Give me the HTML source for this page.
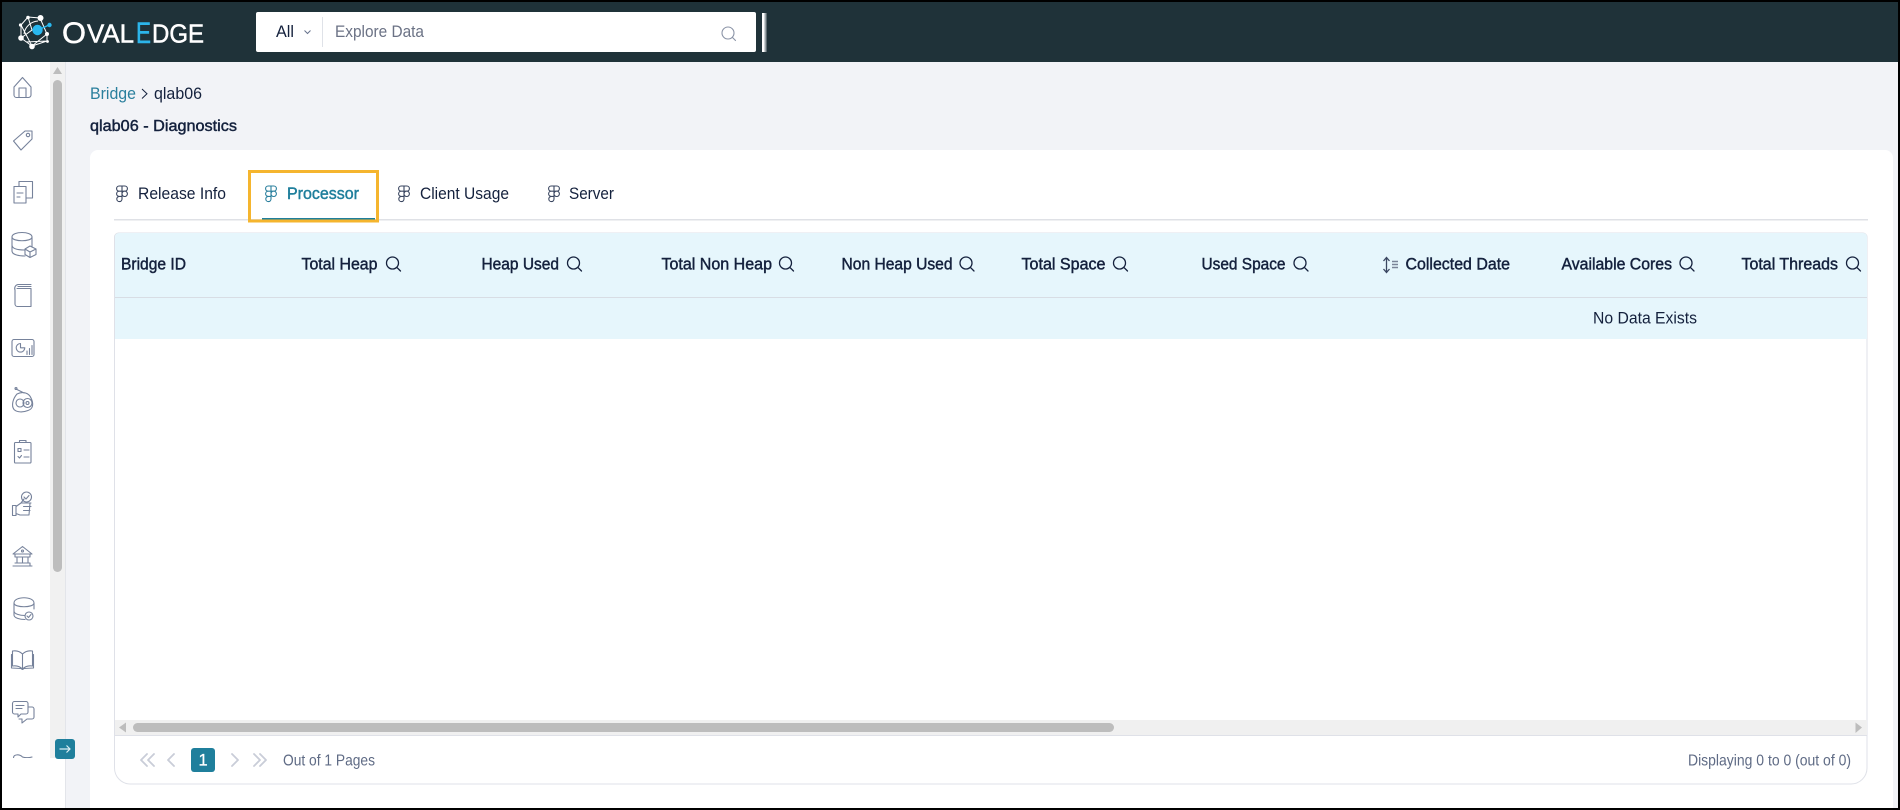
<!DOCTYPE html>
<html><head><meta charset="utf-8"><title>qlab06 - Diagnostics</title>
<style>
html,body{margin:0;padding:0;width:1900px;height:810px;overflow:hidden;background:#000}
svg{position:absolute;left:0;top:0;display:block}
text{font-family:"Liberation Sans",Arial,sans-serif;font-size:16.5px;fill:#14213d}
.m{stroke:#14213d;stroke-width:.45px}
.g{fill:#5f6b85;font-size:16px}
.ic{fill:none;stroke:#76829b;stroke-width:1.1;stroke-linecap:round;stroke-linejoin:round}
.fg{fill:none;stroke:#3a4660;stroke-width:1.1}
.s{fill:none;stroke:#14213d;stroke-width:1.3;stroke-linecap:round}
.c{fill:none;stroke:#c9cdd8;stroke-width:1.8;stroke-linecap:round;stroke-linejoin:round}
</style></head><body>
<svg width="1900" height="810" viewBox="0 0 1900 810" xmlns="http://www.w3.org/2000/svg">
<defs>
<g id="fig"><path d="M6 1H3.2a2.6 2.6 0 0 0 0 5.2H6zM6 1h2.8a2.6 2.6 0 0 1 0 5.2H6zM6 6.2H3.2a2.6 2.6 0 0 0 0 5.2H6zM6 8.8a2.6 2.6 0 1 1 5.4 0a2.6 2.6 0 1 1-5.4 0zM6 11.4H3.2a2.6 2.6 0 1 0 2.8 2.6z"/></g>
<g id="mag"><circle cx="7" cy="7" r="6"/><path d="M11.4 11.4L15 15"/></g>
<clipPath id="sb"><rect x="2" y="62" width="48" height="696"/></clipPath>
</defs>
<!-- page frame -->
<rect x="2" y="2" width="1896" height="806" fill="#f2f3f7"/>
<rect x="2" y="2" width="1896" height="60" fill="#1f3239"/>
<!-- logo -->
<g fill="none" stroke="#fff" stroke-width="1">
<path d="M40 18L28 17L21 25L21 38L32 46L47 34L40 18M28 17L32 30L21 38M21 25L32 46M32 46L47 41M24 34A15 15 0 0 1 38 21M26 42L47 41M47 34L47 41"/>
</g>
<g fill="#fff"><circle cx="40.500" cy="18" r="3"/><circle cx="21" cy="38" r="2.800"/><circle cx="32" cy="46.500" r="2.800"/><circle cx="47" cy="34" r="2"/><circle cx="47.500" cy="41.500" r="1.400"/><circle cx="20.500" cy="25" r="1.600"/><circle cx="28" cy="17.500" r="1.800"/></g>
<path d="M38 30L49 25" stroke="#29b8ef" stroke-width="1.300"/>
<circle cx="37.500" cy="30" r="5.200" fill="#29b8ef"/><circle cx="49.500" cy="25" r="2.200" fill="#29b8ef"/>
<text x="62" y="43" textLength="24" lengthAdjust="spacingAndGlyphs" style="font-size:30px;fill:#fff;stroke:#fff;stroke-width:.5px">O</text>
<text x="87" y="42.500" textLength="47" lengthAdjust="spacingAndGlyphs" style="font-size:26px;fill:#fff;stroke:#fff;stroke-width:.5px">VAL</text>
<text x="136" y="43" textLength="15" lengthAdjust="spacingAndGlyphs" style="font-size:30px;fill:#2cb5ea;stroke:#2cb5ea;stroke-width:.5px">E</text>
<text x="152" y="42.500" textLength="52" lengthAdjust="spacingAndGlyphs" style="font-size:26px;fill:#fff;stroke:#fff;stroke-width:.5px">DGE</text>
<!-- search -->
<rect x="256" y="12" width="500" height="40" rx="2" fill="#fff"/>
<text x="276" y="37" textLength="18" lengthAdjust="spacingAndGlyphs">All</text>
<path d="M304.500 30.500L307.500 33.500L310.500 30.500" fill="none" stroke="#66728c" stroke-width="1"/>
<rect x="322" y="17" width="1" height="30" fill="#dfe2e8"/>
<text x="335" y="37" textLength="89" lengthAdjust="spacingAndGlyphs" style="fill:#6b7285">Explore Data</text>
<g transform="translate(721,26)" fill="none" stroke="#8a93a6" stroke-width="1.100" stroke-linecap="round"><circle cx="7" cy="7" r="6"/><path d="M11.400 11.400L14.500 14.500"/></g>
<rect x="762" y="13" width="2.500" height="39" fill="#fff"/><rect x="764.500" y="13" width="2" height="39" fill="#9aa3a8"/>
<!-- sidebar -->
<rect x="2" y="62" width="63" height="746" fill="#fff"/>
<rect x="50" y="62" width="15" height="696" fill="#f1f1f1"/>
<rect x="65" y="62" width="1" height="746" fill="#e3e5ea"/>
<path d="M57.500 67L53 74H62z" fill="#bdbdbd"/>
<rect x="53" y="80" width="9" height="492" rx="4.500" fill="#bdbdbd"/>
<g class="ic" clip-path="url(#sb)">
<!-- home -->
<path d="M14 87L22.500 77.500L31 87V95a2.500 2.500 0 0 1-2.500 2.500H16.500a2.500 2.500 0 0 1-2.500-2.500zM19 97.500V88H26V97.500"/>
<!-- tag -->
<path d="M13.500 141L25 131H32V139L21 150z"/><circle cx="28" cy="135" r="1.700"/>
<!-- docs -->
<path d="M14 186.500H26V203H14zM19 186V181.500H32.500V198H26M17 193H23M17 197H20"/>
<!-- db cube -->
<path d="M12 237c0-6 20-6 20 0v10M12 237c0 5 20 5 20 0M12 237v14c0 4 8 5 13 5M12 245c0 4 7 5 13 5"/><path d="M30 246L36 249V254.500L30 257.500L25 254.500V249zM25 249L30 252L36 249M30 252V257.500"/>
<!-- book -->
<path d="M15 290V304a2.500 2.500 0 0 0 2.500 2.500H31V288.500H17M15 290a4 4 0 0 1 3-5.500H31M18 286.500H31"/>
<!-- dashboard -->
<rect x="12" y="339.500" width="22" height="17" rx="2"/><path d="M20.500 343.500a4.300 4.300 0 1 0 4.300 4.300H20.500zM27 354.500V351M29.500 354.500V348.500M32 354.500V345.500"/>
<!-- robot -->
<path d="M16 389L24 393M17 394c6-3 12-1 14 4c3 6 2 11-3 12.500c-5 2-11 2-14-1c-3-4-1-11 3-15.500z"/><circle cx="16" cy="388.500" r="1"/><circle cx="20" cy="403" r="4"/><circle cx="27.500" cy="403" r="4.500"/><circle cx="27.500" cy="403" r="1.500"/>
<!-- checklist -->
<rect x="14.500" y="442.500" width="16.500" height="20.500" rx="1"/><path d="M19.500 442.500V440.500H26V442.500M18 448.500H21V451.500H18zM24 450H29M18 456.500L19.500 458L21.500 455.500M24 457H29"/>
<!-- hand -->
<path d="M12.500 505.500H16V515.500H12.500zM16 506.500L21 503L24 499M21 503H31M30 503L29 515H20L16 513.500M23.500 506.500H31M23.500 510.500H30"/><circle cx="26.500" cy="497" r="5"/><path d="M24 497L26 499L29 495.500"/>
<!-- bank -->
<path d="M13 554L22.500 546.500L32 554ZM15 554V557H30V554M17 557V563M22.500 557V563M28 557V563M15 563H30V566M13 566H32"/><circle cx="22.500" cy="551" r="1"/>
<!-- db check -->
<path d="M14 603c0-7 20-7 20 0v6M14 603c0 5 20 5 20 0M14 603v12c0 3 6 4.500 11 4.500M14 611c0 3 6 4.500 11 4.500"/><circle cx="29" cy="616" r="4"/><path d="M27 616L28.500 617.500L31 614.500"/>
<!-- open book -->
<path d="M22.500 654c-3-3-7-3.500-10-3V666c3-.5 7 0 10 3c3-3 7-3.500 10-3V651c-3-.5-7 0-10 3zM22.500 654V669M12 654.500H11.500V668L21 668.500L22.500 669.500L24 668.500L33.500 668V654.500H33"/>
<!-- chat -->
<path d="M14.500 701.500H26a2 2 0 0 1 2 2V712a2 2 0 0 1-2 2H21L18 717V714H14.500a2 2 0 0 1-2-2V703.500a2 2 0 0 1 2-2zM16 705.500H24M16 708.500H22M28 707H32a2 2 0 0 1 2 2V717a2 2 0 0 1-2 2H27L22 723V719H19"/>
<!-- cut-off -->
<path d="M13.500 758c0-4 6-4 9-1c3 1 6 1 9.500 0"/>
</g>
<rect x="55" y="739" width="20" height="20" rx="3" fill="#1f7f9c"/>
<path d="M59.500 749H70M66.500 745.500L70 749L66.500 752.500" fill="none" stroke="#dbeef4" stroke-width="1.200"/>
<!-- breadcrumb -->
<text x="90" y="99" textLength="46" lengthAdjust="spacingAndGlyphs" style="fill:#2a7f9d">Bridge</text>
<path d="M142 89L147 93.800L142 98.500" fill="none" stroke="#14213d" stroke-width="1"/>
<text x="154" y="99" textLength="48" lengthAdjust="spacingAndGlyphs">qlab06</text>
<text x="90" y="131" textLength="147" lengthAdjust="spacingAndGlyphs" class="m" style="font-size:15.500px">qlab06 - Diagnostics</text>
<!-- card -->
<path d="M90 808V158a8 8 0 0 1 8-8H1885a8 8 0 0 1 8 8V808z" fill="#fff"/>
<!-- tabs -->
<rect x="114" y="219" width="1754" height="1.500" fill="#dfe1e6"/>
<use href="#fig" x="116" y="185" class="fg"/>
<use href="#fig" x="265" y="185" class="fg" style="stroke:#2a7f9d"/>
<use href="#fig" x="398" y="185" class="fg"/>
<use href="#fig" x="548" y="185" class="fg"/>
<text x="138" y="199" textLength="88" lengthAdjust="spacingAndGlyphs">Release Info</text>
<text x="287" y="199" textLength="72" lengthAdjust="spacingAndGlyphs" style="fill:#1f7f9c;stroke:#1f7f9c;stroke-width:.45px">Processor</text>
<text x="420" y="199" textLength="89" lengthAdjust="spacingAndGlyphs">Client Usage</text>
<text x="569" y="199" textLength="45" lengthAdjust="spacingAndGlyphs">Server</text>
<rect x="262" y="218" width="113" height="2.500" fill="#1f7f9c"/>
<rect x="249.500" y="171.500" width="128" height="49.500" fill="none" stroke="#f5b52e" stroke-width="3"/>
<!-- table -->
<path d="M114.500 768V237a4 4 0 0 1 4-4H1863a4 4 0 0 1 4 4V768a16 16 0 0 1-16 16H130a16 16 0 0 1-15.500-16" fill="#fff" stroke="#dfe1e8"/>
<path d="M115 339V237a4 4 0 0 1 4-4H1863a4 4 0 0 1 4 4V339z" fill="#e6f6fc"/>
<rect x="115" y="297" width="1752" height="1" fill="#d8dde4"/>
<text x="121" y="269.500" textLength="65" lengthAdjust="spacingAndGlyphs" class="m">Bridge ID</text>
<text x="301.500" y="269.500" textLength="76" lengthAdjust="spacingAndGlyphs" class="m">Total Heap</text>
<text x="481.500" y="269.500" textLength="77.500" lengthAdjust="spacingAndGlyphs" class="m">Heap Used</text>
<text x="661.500" y="269.500" textLength="110.500" lengthAdjust="spacingAndGlyphs" class="m">Total Non Heap</text>
<text x="841.500" y="269.500" textLength="111" lengthAdjust="spacingAndGlyphs" class="m">Non Heap Used</text>
<text x="1021.500" y="269.500" textLength="84" lengthAdjust="spacingAndGlyphs" class="m">Total Space</text>
<text x="1201.500" y="269.500" textLength="84" lengthAdjust="spacingAndGlyphs" class="m">Used Space</text>
<text x="1405.500" y="269.500" textLength="104.500" lengthAdjust="spacingAndGlyphs" class="m">Collected Date</text>
<text x="1561.500" y="269.500" textLength="110.500" lengthAdjust="spacingAndGlyphs" class="m">Available Cores</text>
<text x="1741.500" y="269.500" textLength="96.500" lengthAdjust="spacingAndGlyphs" class="m">Total Threads</text>
<g class="s">
<use href="#mag" x="385.500" y="256"/><use href="#mag" x="566.500" y="256"/><use href="#mag" x="778.500" y="256"/><use href="#mag" x="959" y="256"/><use href="#mag" x="1112.500" y="256"/><use href="#mag" x="1293" y="256"/><use href="#mag" x="1679" y="256"/><use href="#mag" x="1845.500" y="256"/>
</g>
<g fill="none" stroke="#3a4660" stroke-width="1.300"><path d="M1386.500 258V272M1383.500 261L1386.500 257.500L1389.500 261M1383.500 269L1386.500 272.500L1389.500 269"/><path d="M1392 261.500H1398M1392 264.500H1398M1392 267.500H1398" stroke="#7a8498" stroke-width="1.600"/></g>
<text x="1593" y="323.500" textLength="104" lengthAdjust="spacingAndGlyphs">No Data Exists</text>
<!-- hscrollbar -->
<rect x="115" y="720" width="1752" height="15" fill="#f0f0f0"/>
<rect x="115" y="735" width="1752" height="1" fill="#dfe1e8"/>
<path d="M126 722.500V732.500L119 727.500z" fill="#bdbdbd"/>
<rect x="133" y="723" width="981" height="9" rx="4.500" fill="#bdbdbd"/>
<path d="M1855.500 722.500V733L1862 727.500z" fill="#bdbdbd"/>
<!-- pagination -->
<path class="c" d="M147 754L141 760L147 766M154 754L148 760L154 766M174 754L168 760L174 766M232 754L238 760L232 766M254 754L260 760L254 766M260 754L266 760L260 766"/>
<rect x="191" y="748" width="24" height="24" rx="3" fill="#1f7f9c"/>
<text x="198.500" y="765.500" style="fill:#fff;stroke:#fff;stroke-width:.3px">1</text>
<text x="283" y="765.500" textLength="92" lengthAdjust="spacingAndGlyphs" class="g">Out of 1 Pages</text>
<text x="1688" y="765.500" textLength="163" lengthAdjust="spacingAndGlyphs" class="g">Displaying 0 to 0 (out of 0)</text>
</svg>
</body></html>
